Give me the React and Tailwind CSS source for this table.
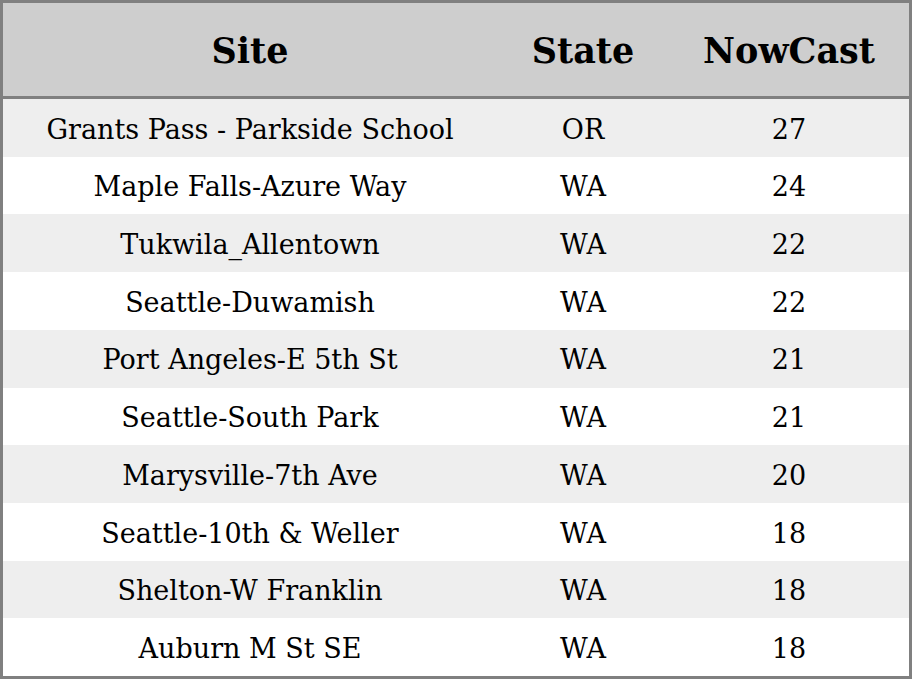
import React from "react";

const rows = [
  ["Grants Pass - Parkside School", "OR", 27],
  ["Maple Falls-Azure Way", "WA", 24],
  ["Tukwila_Allentown", "WA", 22],
  ["Seattle-Duwamish", "WA", 22],
  ["Port Angeles-E 5th St", "WA", 21],
  ["Seattle-South Park", "WA", 21],
  ["Marysville-7th Ave", "WA", 20],
  ["Seattle-10th & Weller", "WA", 18],
  ["Shelton-W Franklin", "WA", 18],
  ["Auburn M St SE", "WA", 18],
];

export default function App() {
  return (
    <div
      className="w-[912px] h-[679px] border-[3px] border-[#808080] bg-white text-black flex flex-col"
      style={{ fontFamily: '"DejaVu Serif", serif' }}
    >
      <div className="h-[96px] shrink-0 flex items-center pt-[4px] bg-[#cecece] border-b-[3px] border-[#808080] text-[35px] font-bold">
        <div className="w-[494px] text-center">Site</div>
        <div className="w-[172px] text-center">State</div>
        <div className="flex-1 text-center">NowCast</div>
      </div>
      <div className="flex-1 flex flex-col">
        {rows.map(([site, state, val], i) => (
          <div
            key={i}
            className={`flex-1 flex items-center pt-[4px] text-[27px] ${i % 2 === 0 ? "bg-[#eeeeee]" : "bg-white"}`}
          >
            <div className="w-[494px] text-center">{site}</div>
            <div className="w-[172px] text-center">{state}</div>
            <div className="flex-1 text-center">{val}</div>
          </div>
        ))}
      </div>
    </div>
  );
}
